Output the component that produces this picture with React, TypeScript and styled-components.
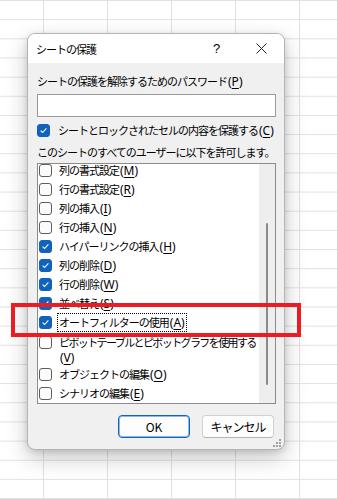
import React from 'react';
import styled, { createGlobalStyle } from 'styled-components';

const GlobalStyle = createGlobalStyle`
  html, body {
    margin: 0;
    padding: 0;
  }
  body {
    width: 337px;
    height: 499px;
    overflow: hidden;
    background-color: #ffffff;
    background-image:
      linear-gradient(to right, #e1e1e1 1px, transparent 1px),
      linear-gradient(to bottom, #e1e1e1 1px, transparent 1px);
    background-size: 64px 19.17px;
    background-position: 43px 0;
    font-family: "Noto Sans CJK JP", "Noto Sans", sans-serif;
    color: #000;
  }
`;

const Page = styled.div`
  position: relative;
  width: 337px;
  height: 499px;
  padding: 33px 0 0 27px;
  box-sizing: border-box;
`;

const Dialog = styled.div`
  position: relative;
  width: 258px;
  height: 417px;
  box-sizing: border-box;
  border: 1px solid #b4b4b4;
  border-radius: 8px;
  overflow: hidden;
  background: #f0f0f0;
  box-shadow: 0 8px 22px rgba(0, 0, 0, 0.22), 0 2px 6px rgba(0, 0, 0, 0.12);
  display: flex;
  flex-direction: column;
  font-size: 11px;
  letter-spacing: -1px;
`;

const TitleBar = styled.div`
  height: 29px;
  background: #ffffff;
  display: flex;
  align-items: center;
  padding-left: 8px;
`;

const Title = styled.div`
  flex: 1;
  line-height: 16px;
`;

const TitleButton = styled.div`
  width: 45px;
  height: 29px;
  display: flex;
  align-items: center;
  justify-content: center;
  font-size: 13px;
  letter-spacing: 0;
  font-family: "Liberation Sans", sans-serif;
`;

const Body = styled.div`
  flex: 1;
  display: flex;
  flex-direction: column;
  padding: 10px 8px 0 9px;
`;

const Label = styled.div<{ $gap?: number }>`
  line-height: 16px;
  margin-top: ${p => p.$gap ?? 0}px;
  white-space: nowrap;
`;

const Input = styled.div`
  margin-top: 4px;
  width: 239px;
  height: 23px;
  box-sizing: border-box;
  border: 1px solid #9a9a9a;
  background: #fff;
`;

const CheckRow = styled.div<{ $gap?: number }>`
  display: flex;
  align-items: center;
  gap: 8px;
  height: 16px;
  margin-top: ${p => p.$gap ?? 0}px;
  white-space: nowrap;
`;

const Box = styled.span<{ $checked: boolean }>`
  flex: none;
  width: 13px;
  height: 13px;
  box-sizing: border-box;
  border-radius: 3px;
  border: 1px solid ${p => (p.$checked ? '#0f62be' : '#5e5e5e')};
  background: ${p => (p.$checked ? '#0f62be' : '#fbfbfb')};
  display: flex;
  align-items: center;
  justify-content: center;
`;

const List = styled.div`
  margin-top: 3px;
  width: 239px;
  height: 241px;
  box-sizing: border-box;
  border: 1px solid #8c8c8c;
  background: #fff;
  display: flex;
  overflow: hidden;
`;

const Items = styled.div`
  flex: 1;
  min-width: 0;
  margin-top: -3px;
  display: flex;
  flex-direction: column;
`;

const Item = styled.div<{ $tall?: boolean }>`
  display: flex;
  align-items: ${p => (p.$tall ? 'flex-start' : 'center')};
  gap: 7px;
  padding-left: 1px;
  height: ${p => (p.$tall ? 33 : 19)}px;
  box-sizing: border-box;
  padding-top: ${p => (p.$tall ? 2 : 0)}px;
  white-space: nowrap;
  & > span:first-child {
    margin-top: ${p => (p.$tall ? 2 : 0)}px;
  }
`;

const ItemText = styled.span<{ $focus?: boolean; $tall?: boolean }>`
  line-height: ${p => (p.$tall ? 15 : 16)}px;
  letter-spacing: ${p => (p.$tall ? -1.6 : -1)}px;
  padding: 0 1px;
  margin-left: -2px;
  border: 1px dotted ${p => (p.$focus ? '#000' : 'transparent')};
`;

const Track = styled.div`
  flex: none;
  width: 16px;
  background: #eeeeee;
  display: flex;
  justify-content: center;
`;

const Thumb = styled.div`
  margin-top: 59px;
  width: 2px;
  height: 162px;
  border-radius: 1px;
  background: #8a8a8a;
`;

const Buttons = styled.div`
  margin-top: 11px;
  display: flex;
  justify-content: flex-end;
  gap: 12px;
  padding-right: 2px;
`;

const Button = styled.div<{ $primary?: boolean }>`
  width: 72px;
  height: 23px;
  box-sizing: border-box;
  border-radius: 4px;
  background: #fdfdfd;
  border: 1px solid ${p => (p.$primary ? '#0a64c8' : '#d2d2d2')};
  border-bottom-color: ${p => (p.$primary ? '#0a64c8' : '#b5b5b5')};
  box-shadow: ${p => (p.$primary ? 'inset 0 0 0 1px rgba(10,100,200,0.45)' : 'none')};
  display: flex;
  align-items: center;
  justify-content: center;
  font-size: 12px;
  letter-spacing: ${p => (p.$primary ? '0' : '-1px')};
`;

const Grip = styled.svg`
  position: absolute;
  right: 2px;
  bottom: 1px;
`;

const Highlight = styled.div`
  position: absolute;
  left: 11px;
  top: 303px;
  width: 290px;
  height: 34px;
  box-sizing: border-box;
  border: 4px solid #ec1c24;
  pointer-events: none;
`;

// the "(X)" access key part uses a latin face, like Windows does
const Access = styled.span`
  font-family: "Noto Sans", "Liberation Sans", sans-serif;
  font-size: 12px;
  letter-spacing: 0;
  margin-left: 1px;
`;

const Key = styled.u`
  text-underline-offset: 2px;
`;

const Check = ({ checked }: { checked: boolean }) => (
  <Box $checked={checked}>
    {checked && (
      <svg width="11" height="11" viewBox="0 0 11 11">
        <path d="M2.6 5.6 L4.6 7.5 L8.4 3.4" fill="none" stroke="#fff" strokeWidth="1.1" />
      </svg>
    )}
  </Box>
);

const AccessKey = ({ k }: { k: string }) => (
  <Access>
    (<Key>{k}</Key>)
  </Access>
);

const withKey = (text: string, key: string) => (
  <>
    {text}
    <AccessKey k={key} />
  </>
);

const items: { text: string; key: string; checked: boolean; focus?: boolean }[] = [
  { text: '列の書式設定', key: 'M', checked: false },
  { text: '行の書式設定', key: 'R', checked: false },
  { text: '列の挿入', key: 'I', checked: false },
  { text: '行の挿入', key: 'N', checked: false },
  { text: 'ハイパーリンクの挿入', key: 'H', checked: true },
  { text: '列の削除', key: 'D', checked: true },
  { text: '行の削除', key: 'W', checked: true },
  { text: '並べ替え', key: 'S', checked: true },
  { text: 'オートフィルターの使用', key: 'A', checked: true, focus: true },
];

export default function App() {
  return (
    <>
      <GlobalStyle />
      <Page>
        <Dialog>
          <TitleBar>
            <Title>シートの保護</Title>
            <TitleButton>?</TitleButton>
            <TitleButton>
              <svg width="11" height="11" viewBox="0 0 11 11">
                <path d="M0.5 0.5 L10.5 10.5 M10.5 0.5 L0.5 10.5" stroke="#222" strokeWidth="1" />
              </svg>
            </TitleButton>
          </TitleBar>
          <Body>
            <Label>{withKey('シートの保護を解除するためのパスワード', 'P')}</Label>
            <Input />
            <CheckRow $gap={5}>
              <Check checked />
              <span>{withKey('シートとロックされたセルの内容を保護する', 'C')}</span>
            </CheckRow>
            <Label $gap={6}>このシートのすべてのユーザーに以下を許可します。</Label>
            <List>
              <Items>
                {items.map(it => (
                  <Item key={it.key}>
                    <Check checked={it.checked} />
                    <ItemText $focus={it.focus}>{withKey(it.text, it.key)}</ItemText>
                  </Item>
                ))}
                <Item $tall>
                  <Check checked={false} />
                  <ItemText $tall>
                    ピボットテーブルとピボットグラフを使用する
                    <br />
                    <AccessKey k="V" />
                  </ItemText>
                </Item>
                <Item>
                  <Check checked={false} />
                  <ItemText>{withKey('オブジェクトの編集', 'O')}</ItemText>
                </Item>
                <Item>
                  <Check checked={false} />
                  <ItemText>{withKey('シナリオの編集', 'E')}</ItemText>
                </Item>
              </Items>
              <Track>
                <Thumb />
              </Track>
            </List>
            <Buttons>
              <Button $primary>OK</Button>
              <Button>キャンセル</Button>
            </Buttons>
          </Body>
          <Grip width="9" height="9" viewBox="0 0 9 9">
            <g fill="#a0a0a0">
              <rect x="6" y="0" width="2" height="2" />
              <rect x="3" y="3" width="2" height="2" />
              <rect x="6" y="3" width="2" height="2" />
              <rect x="0" y="6" width="2" height="2" />
              <rect x="3" y="6" width="2" height="2" />
              <rect x="6" y="6" width="2" height="2" />
            </g>
          </Grip>
        </Dialog>
        <Highlight />
      </Page>
    </>
  );
}
